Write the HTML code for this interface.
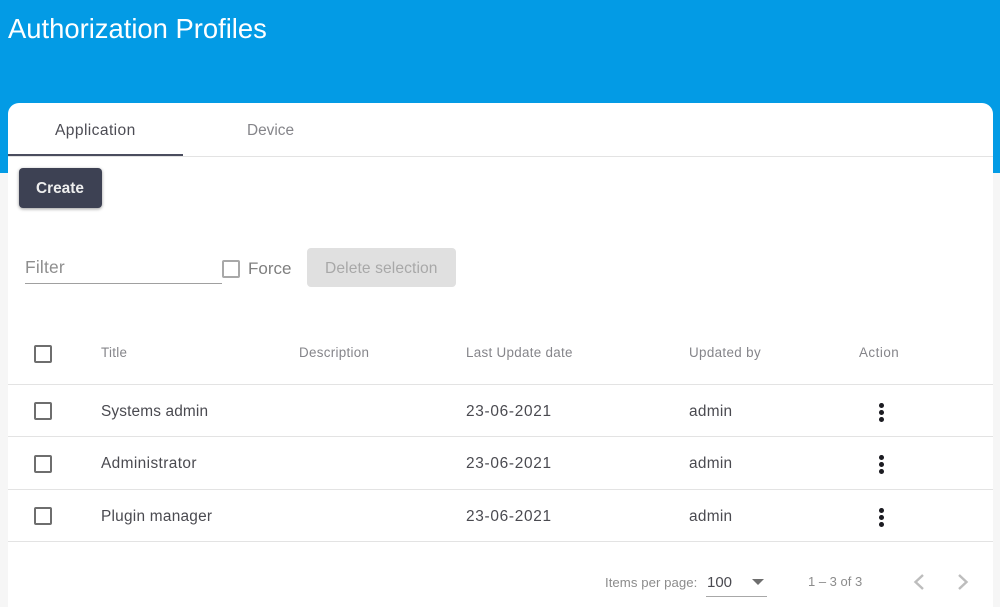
<!DOCTYPE html>
<html>
<head>
<meta charset="utf-8">
<style>
html,body{margin:0;padding:0;width:1000px;height:607px;overflow:hidden;background:#f6f6f6;font-family:"Liberation Sans",sans-serif;}
.t{position:absolute;white-space:nowrap;line-height:1;}
.blue{position:absolute;left:0;top:0;width:1000px;height:173px;background:#039be5;}
.card{position:absolute;left:8px;top:103px;width:985px;height:504px;background:#fff;border-radius:11px 11px 0 0;}
.line{position:absolute;left:8px;width:985px;height:1px;background:#e3e3e3;}
.cb{position:absolute;width:14px;height:14px;border:2px solid #6e6e6e;border-radius:2px;box-sizing:content-box;}
.cell{font-size:15.4px;color:#4a4a50;letter-spacing:.15px;}
.date{letter-spacing:.7px;}
.head{font-size:13.4px;color:#85858a;letter-spacing:.3px;}
.dots{position:absolute;width:5px;}
.dots i{display:block;width:4.8px;height:4.8px;border-radius:50%;background:#1c1c22;margin-bottom:2.3px;}
</style>
</head>
<body>
<div class="blue"></div>
<div class="t" style="left:8px;top:15px;font-size:27.4px;color:#fff;">Authorization Profiles</div>
<div class="card"></div>

<div class="t" style="left:55px;top:123px;font-size:15.6px;color:#4c4c54;letter-spacing:.4px;">Application</div>
<div class="t" style="left:247px;top:123px;font-size:15.4px;color:#85858a;">Device</div>
<div class="line" style="top:156px;"></div>
<div style="position:absolute;left:8px;top:154px;width:175px;height:2px;background:#4a4d5e;"></div>

<div style="position:absolute;left:19px;top:168px;width:83px;height:40px;background:#3d4153;border-radius:4px;box-shadow:0 1px 3px rgba(0,0,0,.4);"></div>
<div class="t" style="left:36px;top:181px;font-size:15.4px;font-weight:bold;color:#eee;">Create</div>

<div class="t" style="left:25px;top:259px;font-size:17.4px;color:#8e8e8e;letter-spacing:.2px;">Filter</div>
<div style="position:absolute;left:25px;top:283px;width:197px;height:1px;background:#a0a0a0;"></div>
<div class="cb" style="left:222px;top:260px;border-color:#a8a8a8;"></div>
<div class="t" style="left:248px;top:260px;font-size:17px;color:#7f7f7f;">Force</div>
<div style="position:absolute;left:307px;top:248px;width:149px;height:39px;background:#e0e0e0;border-radius:4px;"></div>
<div class="t" style="left:325px;top:261px;font-size:15.6px;color:#a8a8a8;letter-spacing:.1px;">Delete selection</div>

<div class="cb" style="left:34px;top:345px;"></div>
<div class="t head" style="left:101px;top:346px;">Title</div>
<div class="t head" style="left:299px;top:346px;">Description</div>
<div class="t head" style="left:466px;top:346px;">Last Update date</div>
<div class="t head" style="left:689px;top:346px;letter-spacing:.35px;">Updated by</div>
<div class="t head" style="left:859px;top:346px;letter-spacing:.5px;">Action</div>
<div class="line" style="top:384px;"></div>

<div class="cb" style="left:34px;top:402px;"></div>
<div class="t cell" style="left:101px;top:404px;">Systems admin</div>
<div class="t cell date" style="left:466px;top:404px;">23-06-2021</div>
<div class="t cell" style="left:689px;top:404px;letter-spacing:.3px;">admin</div>
<div class="dots" style="left:879px;top:403px;"><i></i><i></i><i></i></div>
<div class="line" style="top:436px;"></div>

<div class="cb" style="left:34px;top:455px;"></div>
<div class="t cell" style="left:101px;top:456px;letter-spacing:.4px;">Administrator</div>
<div class="t cell date" style="left:466px;top:456px;">23-06-2021</div>
<div class="t cell" style="left:689px;top:456px;letter-spacing:.3px;">admin</div>
<div class="dots" style="left:879px;top:455px;"><i></i><i></i><i></i></div>
<div class="line" style="top:489px;"></div>

<div class="cb" style="left:34px;top:507px;"></div>
<div class="t cell" style="left:101px;top:509px;letter-spacing:.25px;">Plugin manager</div>
<div class="t cell date" style="left:466px;top:509px;">23-06-2021</div>
<div class="t cell" style="left:689px;top:509px;letter-spacing:.3px;">admin</div>
<div class="dots" style="left:879px;top:508px;"><i></i><i></i><i></i></div>
<div class="line" style="top:541px;"></div>

<div class="t" style="left:605px;top:576px;font-size:13.2px;color:#8c8c8c;letter-spacing:.05px;">Items per page:</div>
<div class="t" style="left:707px;top:575px;font-size:15px;color:#4a4a50;">100</div>
<svg style="position:absolute;left:752px;top:579px;" width="12" height="6" viewBox="0 0 12 6"><path d="M0 0L12 0L6 6Z" fill="#6e6e6e"/></svg>
<div style="position:absolute;left:706px;top:596px;width:61px;height:1px;background:#a8a8a8;"></div>
<div class="t" style="left:808px;top:575px;font-size:13px;color:#8c8c8c;">1 – 3 of 3</div>
<svg style="position:absolute;left:912px;top:574px;" width="14" height="16" viewBox="0 0 14 16"><path d="M11 1L3.500 8L11 15" fill="none" stroke="#bdbdbd" stroke-width="2.400"/></svg>
<svg style="position:absolute;left:956px;top:574px;" width="14" height="16" viewBox="0 0 14 16"><path d="M3 1L10.500 8L3 15" fill="none" stroke="#bdbdbd" stroke-width="2.400"/></svg>
</body>
</html>
